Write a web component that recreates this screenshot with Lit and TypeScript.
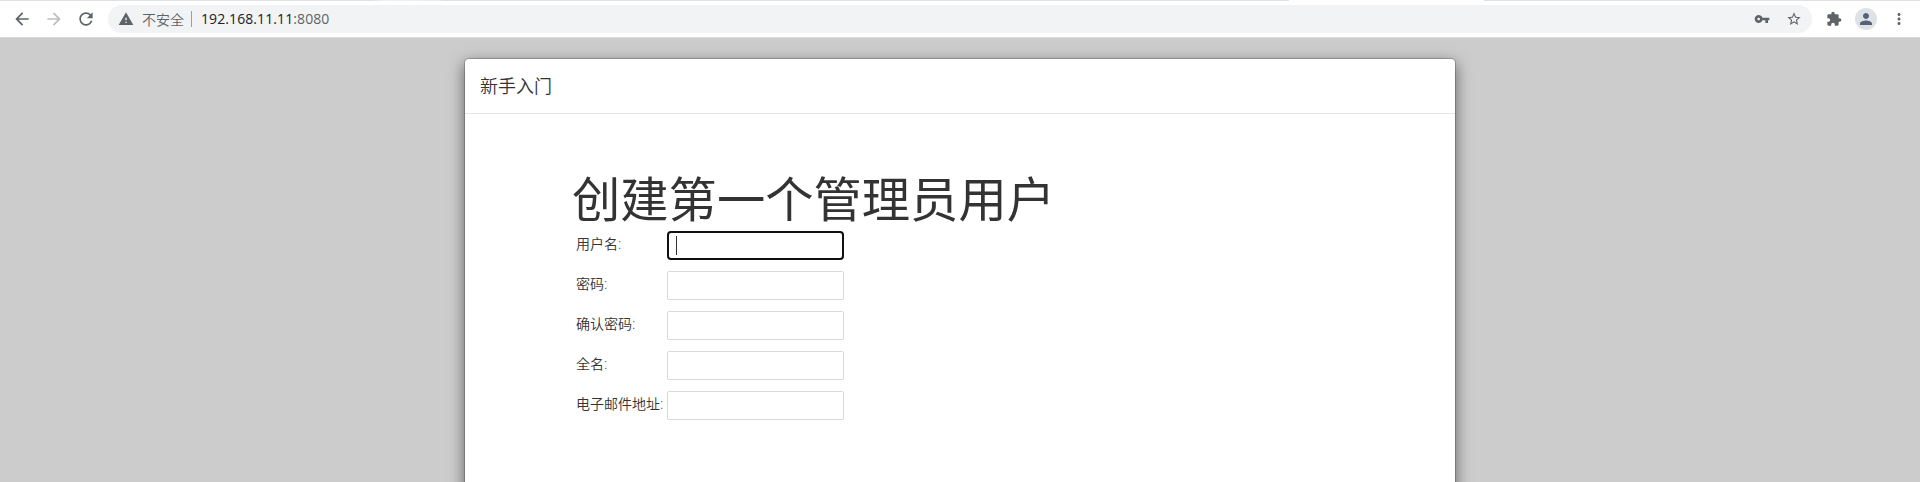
import { LitElement, html, css, svg } from "lit";
import { customElement } from "lit/decorators.js";

const icon = (path: unknown, size: number) =>
  html`<svg viewBox="0 0 24 24" width=${size} height=${size} fill="currentColor">${path}</svg>`;

const BACK = svg`<path d="M20 11H7.83l5.59-5.59L12 4l-8 8 8 8 1.41-1.41L7.83 13H20v-2z"/>`;
const FORWARD = svg`<path d="M12 4l-1.41 1.41L16.17 11H4v2h12.17l-5.58 5.59L12 20l8-8z"/>`;
const RELOAD = svg`<path d="M17.65 6.35C16.2 4.9 14.21 4 12 4c-4.42 0-7.99 3.58-7.99 8s3.57 8 7.99 8c3.73 0 6.84-2.55 7.73-6h-2.08c-.82 2.33-3.04 4-5.65 4-3.31 0-6-2.69-6-6s2.69-6 6-6c1.66 0 3.14.69 4.22 1.78L13 11h7V4l-2.35 2.35z"/>`;
const WARNING = svg`<path d="M1 21h22L12 2 1 21zm12-3h-2v-2h2v2zm0-4h-2v-4h2v4z"/>`;
const KEY = svg`<path d="M12.65 10C11.83 7.67 9.61 6 7 6c-3.31 0-6 2.69-6 6s2.69 6 6 6c2.61 0 4.83-1.67 5.65-4H17v4h4v-4h2v-4H12.65zM7 14c-1.1 0-2-.9-2-2s.9-2 2-2 2 .9 2 2-.9 2-2 2z"/>`;
const STAR = svg`<path d="M22 9.24l-7.19-.62L12 2 9.19 8.63 2 9.24l5.46 4.73L5.82 21 12 17.27 18.18 21l-1.63-7.03L22 9.24zM12 15.4l-3.76 2.27 1-4.28-3.32-2.88 4.38-.38L12 6.1l1.71 4.04 4.38.38-3.32 2.88 1 4.28L12 15.4z"/>`;
const PUZZLE = svg`<path d="M20.5 11H19V7c0-1.1-.9-2-2-2h-4V3.5C13 2.12 11.88 1 10.5 1S8 2.12 8 3.5V5H4c-1.1 0-1.99.9-1.99 2v3.8H3.5c1.49 0 2.7 1.21 2.7 2.7s-1.21 2.7-2.7 2.7H2V20c0 1.1.9 2 2 2h3.8v-1.5c0-1.49 1.21-2.7 2.7-2.7 1.49 0 2.7 1.21 2.7 2.7V22H17c1.1 0 2-.9 2-2v-4h1.5c1.38 0 2.5-1.12 2.5-2.5S21.88 11 20.5 11z"/>`;
const PERSON = svg`<path d="M12 12c2.21 0 4-1.79 4-4s-1.79-4-4-4-4 1.79-4 4 1.79 4 4 4zm0 2c-2.67 0-8 1.34-8 4v2h16v-2c0-2.66-5.33-4-8-4z"/>`;
const MORE = svg`<path d="M12 8c1.1 0 2-.9 2-2s-.9-2-2-2-2 .9-2 2 .9 2 2 2zm0 2c-1.1 0-2 .9-2 2s.9 2 2 2 2-.9 2-2-.9-2-2-2zm0 6c-1.1 0-2 .9-2 2s.9 2 2 2 2-.9 2-2-.9-2-2-2z"/>`;

@customElement("browser-toolbar")
class BrowserToolbar extends LitElement {
  static styles = css`
    :host {
      display: block;
      flex: none;
      height: 38px;
      box-sizing: border-box;
      background: #fff;
      border-bottom: 1px solid #d9dadb;
      color: #5f6368;
      font: 14px/28px "Open Sans", "Noto Sans CJK SC", sans-serif;
    }
    svg { display: block; flex: none; }
    .tabs {
      height: 1px;
      background: linear-gradient(90deg, #dee1e6 370px, #f1f2f4 385px, #e9ebee 440px, #dee1e6 443px, #dee1e6 1289px, #fff 1289px, #fff 1484px, #dee1e6 1484px);
    }
    .bar { display: flex; align-items: center; height: 28px; padding: 4px 11px 0 12px; }
    .nav { display: flex; gap: 12px; width: 96px; }
    .off { color: #bcbec1; }
    .address {
      display: flex;
      align-items: center;
      box-sizing: border-box;
      width: 1704px;
      height: 28px;
      padding: 0 10px;
      border-radius: 14px;
      background: #f1f3f4;
    }
    .unsafe { margin-left: 8px; font-family: "Noto Sans CJK SC", sans-serif; font-weight: 350; }
    .sep { width: 1px; height: 16px; margin: 0 9px 0 7px; background: #9aa0a6; }
    .url { flex: 1; letter-spacing: 0.09px; }
    .host { color: #202124; }
    .star { margin: 0 0 0 16px; }
    .actions { display: flex; align-items: center; margin-left: 14px; }
    .avatar {
      display: grid;
      place-items: center;
      width: 22px;
      height: 22px;
      margin: 0 13px;
      border-radius: 50%;
      background: #dee1e6;
      color: #54627a;
    }
  `;
  render() {
    return html`
      <div class="tabs"></div>
      <div class="bar">
        <div class="nav">
          ${icon(BACK, 20)}<span class="off">${icon(FORWARD, 20)}</span>${icon(RELOAD, 20)}
        </div>
        <div class="address">
          ${icon(WARNING, 16)}<span class="unsafe">不安全</span><span class="sep"></span>
          <span class="url"><span class="host">192.168.11.11</span>:8080</span>
          ${icon(KEY, 16)}<span class="star">${icon(STAR, 16)}</span>
        </div>
        <div class="actions">
          ${icon(PUZZLE, 16)}<span class="avatar">${icon(PERSON, 18)}</span>${icon(MORE, 18)}
        </div>
      </div>`;
  }
}

@customElement("setup-dialog")
class SetupDialog extends LitElement {
  static styles = css`
    :host {
      display: block;
      box-sizing: border-box;
      width: 992px;
      height: 560px;
      border: 1px solid rgba(0, 0, 0, 0.2);
      border-radius: 5px;
      background: #fff;
      background-clip: padding-box;
      box-shadow: 0 5px 15px rgba(0, 0, 0, 0.5);
      color: #333;
      font: 400 14px/20px "Open Sans", "Noto Sans CJK SC", sans-serif;
    }
    .header {
      height: 54px;
      padding: 0 15px;
      border-bottom: 1px solid #e5e5e5;
      font-size: 18px;
      line-height: 55px;
      font-weight: 350;
    }
    .body { padding: 57px 109px 0; }
    h1 { height: 60px; margin: 0 0 0 -2px; font-size: 48.3px; font-weight: 400; line-height: 55px; }
    .form { display: grid; grid-template-columns: 91px 177px; row-gap: 11px; padding-left: 2px; }
    label { line-height: 25px; white-space: nowrap; font-weight: 350; }
    .field {
      box-sizing: border-box;
      height: 29px;
      border: 1px solid #d9d9d9;
      border-radius: 2px;
    }
    .focused { display: flex; padding: 3px 7px; border: 2px solid #101010; border-radius: 4px; }
    .caret { width: 1px; height: 19px; background: #333; }
  `;
  render() {
    const labels = ["用户名:", "密码:", "确认密码:", "全名:", "电子邮件地址:"];
    return html`
      <div class="header">新手入门</div>
      <div class="body">
        <h1>创建第一个管理员用户</h1>
        <div class="form">
          ${labels.map((label, i) => html`
            <label>${label}</label>
            ${i === 0
              ? html`<div class="field focused"><span class="caret"></span></div>`
              : html`<div class="field"></div>`}`)}
        </div>
      </div>`;
  }
}

@customElement("app-root")
class AppRoot extends LitElement {
  static styles = css`
    :host { display: flex; flex-direction: column; height: 482px; overflow: hidden; }
    .page {
      flex: 1;
      min-height: 0;
      overflow: hidden;
      display: flex;
      justify-content: center;
      align-items: flex-start;
      padding-top: 20px;
      background: #ccc;
    }
  `;
  render() {
    return html`<browser-toolbar></browser-toolbar><div class="page"><setup-dialog></setup-dialog></div>`;
  }
}
